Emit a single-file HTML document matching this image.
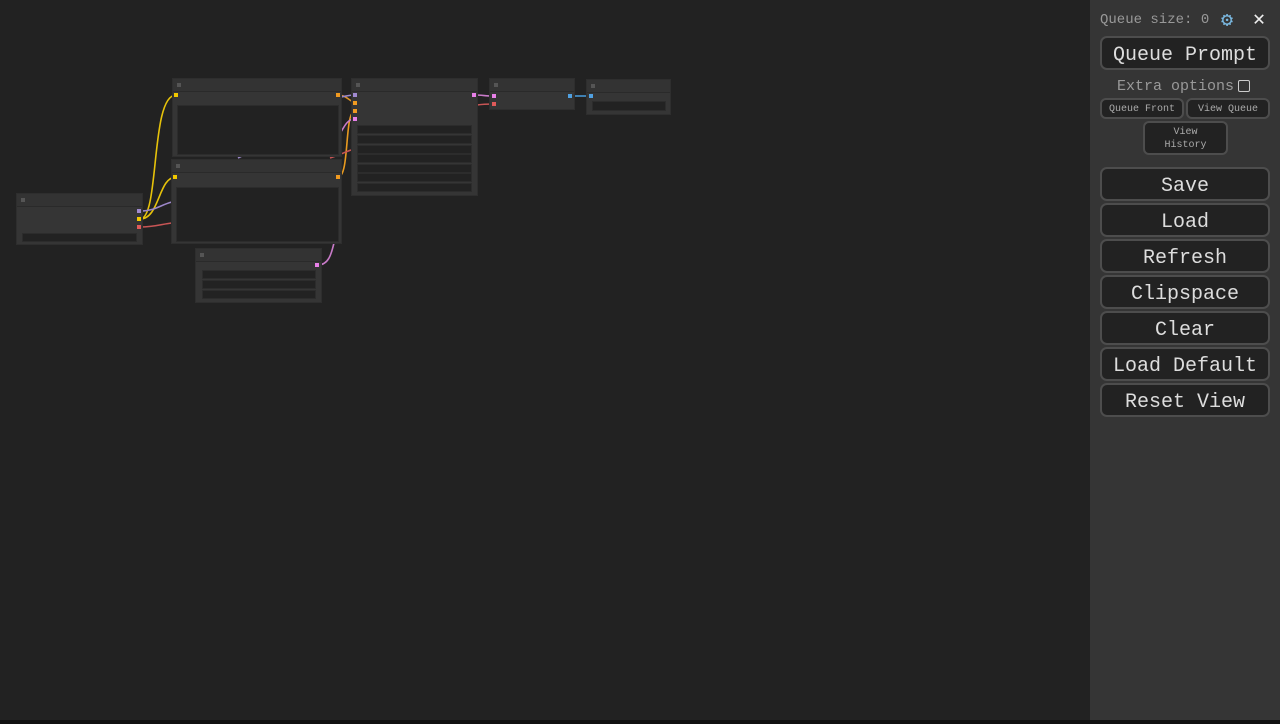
<!DOCTYPE html>
<html><head><style>
body{margin:0;width:1280px;height:724px;background:#222;overflow:hidden;position:relative;font-family:"Liberation Mono",monospace}
.n{position:absolute;background:#353535;border:1px solid #2e2e2e;box-sizing:border-box}
.t{position:absolute;left:0;right:0;top:0;background:#333;border-bottom:1px solid #2a2a2a}
.t:before{content:"";position:absolute;left:4px;top:4px;width:4px;height:4px;background:#555}
.w{position:absolute;background:#222;border:1px solid #2c2c2c;box-sizing:border-box}
.s{position:absolute;width:4px;height:4px}
#side{position:absolute;left:1090px;top:0;width:190px;height:720px;background:#353535}
.b{position:absolute;left:10px;width:170px;height:34px;box-sizing:border-box;background:#222;border:2px solid #4d4d4d;border-radius:7px;color:#ddd;font-size:20px;text-align:center;line-height:30px;padding-top:3px}
.sb{position:absolute;height:21px;box-sizing:border-box;background:#222;border:2px solid #4d4d4d;border-radius:6px;color:#aaa;font-size:10px;text-align:center;line-height:17px;padding-top:1px}
</style></head><body>
<svg width="1090" height="724" style="position:absolute;left:0;top:0" fill="none" stroke-width="1.6">
<path d="M140 219 C160 219,150 95,176 95" stroke="#e6c20a"/>
<path d="M140 219 C160 219,158 177,176 177" stroke="#e6c20a"/>
<path d="M140 211 C155 211,160 205,172 202" stroke="#9c87c9"/>
<path d="M140 227 C155 227,162 224,172 223" stroke="#c85555"/>
<path d="M338 95 C346 95,348 100,355 103" stroke="#d8902a"/>
<path d="M338 177 C350 177,344 111,355 111" stroke="#e89a20"/>
<path d="M341 97 C346 96,350 95,355 95" stroke="#9c87c9"/>
<path d="M318 265 C330 265,332 250,334 243" stroke="#c87ac8"/>
<path d="M341 132 C345 125,348 119,355 119" stroke="#c87ac8"/>
<path d="M330 158 C340 155,345 152,351 150" stroke="#c85555"/>
<path d="M238 158 L244 155" stroke="#9c87c9"/>
<path d="M474 95 C482 95,486 96,493 96" stroke="#c87ac8"/>
<path d="M477 105 C484 104,488 104,493 104" stroke="#c85555"/>
<path d="M570 96 L590 96" stroke="#3f7fb0" stroke-width="2"/>
</svg>
<div class="n" style="left:16px;top:193px;width:127px;height:52px"><div class="t" style="height:12px"></div><div class="w" style="left:5px;top:39px;width:115px;height:9px"></div></div>
<div class="n" style="left:172px;top:78px;width:170px;height:79px"><div class="t" style="height:12px"></div><div class="w" style="left:4px;top:26px;width:162px;height:50px"></div></div>
<div class="n" style="left:171px;top:159px;width:171px;height:85px"><div class="t" style="height:12px"></div><div class="w" style="left:4px;top:27px;width:163px;height:55px"></div></div>
<div class="n" style="left:195px;top:248px;width:127px;height:55px"><div class="t" style="height:12px"></div><div class="w" style="left:6px;top:21px;width:114px;height:9px"></div><div class="w" style="left:6px;top:31px;width:114px;height:9px"></div><div class="w" style="left:6px;top:41px;width:114px;height:9px"></div></div>
<div class="n" style="left:351px;top:78px;width:127px;height:118px"><div class="t" style="height:12px"></div>
<div class="w" style="left:5px;top:46px;width:115px;height:9px"></div><div class="w" style="left:5px;top:56px;width:115px;height:9px"></div><div class="w" style="left:5px;top:66px;width:115px;height:9px"></div><div class="w" style="left:5px;top:75px;width:115px;height:9px"></div><div class="w" style="left:5px;top:85px;width:115px;height:9px"></div><div class="w" style="left:5px;top:94px;width:115px;height:9px"></div><div class="w" style="left:5px;top:104px;width:115px;height:9px"></div></div>
<div class="n" style="left:489px;top:78px;width:86px;height:32px"><div class="t" style="height:12px"></div></div>
<div class="n" style="left:586px;top:79px;width:85px;height:36px"><div class="t" style="height:12px"></div><div class="w" style="left:5px;top:21px;width:74px;height:10px"></div></div>
<div class="s" style="left:137px;top:209px;background:#a08ad0"></div>
<div class="s" style="left:137px;top:217px;background:#f0c800"></div>
<div class="s" style="left:137px;top:225px;background:#e05a5a"></div>
<div class="s" style="left:174px;top:93px;background:#f0c800"></div>
<div class="s" style="left:336px;top:93px;background:#f09a20"></div>
<div class="s" style="left:173px;top:175px;background:#f0c800"></div>
<div class="s" style="left:336px;top:175px;background:#f09a20"></div>
<div class="s" style="left:315px;top:263px;background:#e880e8"></div>
<div class="s" style="left:353px;top:93px;background:#a08ad0"></div>
<div class="s" style="left:353px;top:101px;background:#f09a20"></div>
<div class="s" style="left:353px;top:109px;background:#f09a20"></div>
<div class="s" style="left:353px;top:117px;background:#e880e8"></div>
<div class="s" style="left:472px;top:93px;background:#e880e8"></div>
<div class="s" style="left:492px;top:94px;background:#e880e8"></div>
<div class="s" style="left:492px;top:102px;background:#e05a5a"></div>
<div class="s" style="left:568px;top:94px;background:#50a0e0"></div>
<div class="s" style="left:589px;top:94px;background:#50a0e0"></div>
<div style="position:absolute;left:0;top:720px;width:1280px;height:4px;background:#111"></div>
<div id="side">
<div style="position:absolute;left:10px;top:12px;color:#999;font-size:14px">Queue size: 0</div>
<div style="position:absolute;left:131px;top:7px;color:#7ab8e0;font-size:20px">⚙</div>
<div style="position:absolute;left:163px;top:6px;color:#eee;font-size:20px;font-weight:bold">✕</div>
<div class="b" style="top:36px;font-size:20px">Queue Prompt</div>
<div style="position:absolute;left:27px;top:78px;color:#999;font-size:15px">Extra options</div>
<div style="position:absolute;left:148px;top:80px;width:12px;height:12px;border:1px solid #ccc;border-radius:2px;box-sizing:border-box"></div>
<div class="sb" style="left:10px;top:98px;width:84px">Queue Front</div>
<div class="sb" style="left:96px;top:98px;width:84px">View Queue</div>
<div class="sb" style="left:53px;top:121px;width:85px;height:34px;line-height:13px;padding-top:3px">View<br>History</div>
<div class="b" style="top:167px">Save</div>
<div class="b" style="top:203px">Load</div>
<div class="b" style="top:239px">Refresh</div>
<div class="b" style="top:275px">Clipspace</div>
<div class="b" style="top:311px">Clear</div>
<div class="b" style="top:347px">Load Default</div>
<div class="b" style="top:383px">Reset View</div>
</div>
</body></html>
